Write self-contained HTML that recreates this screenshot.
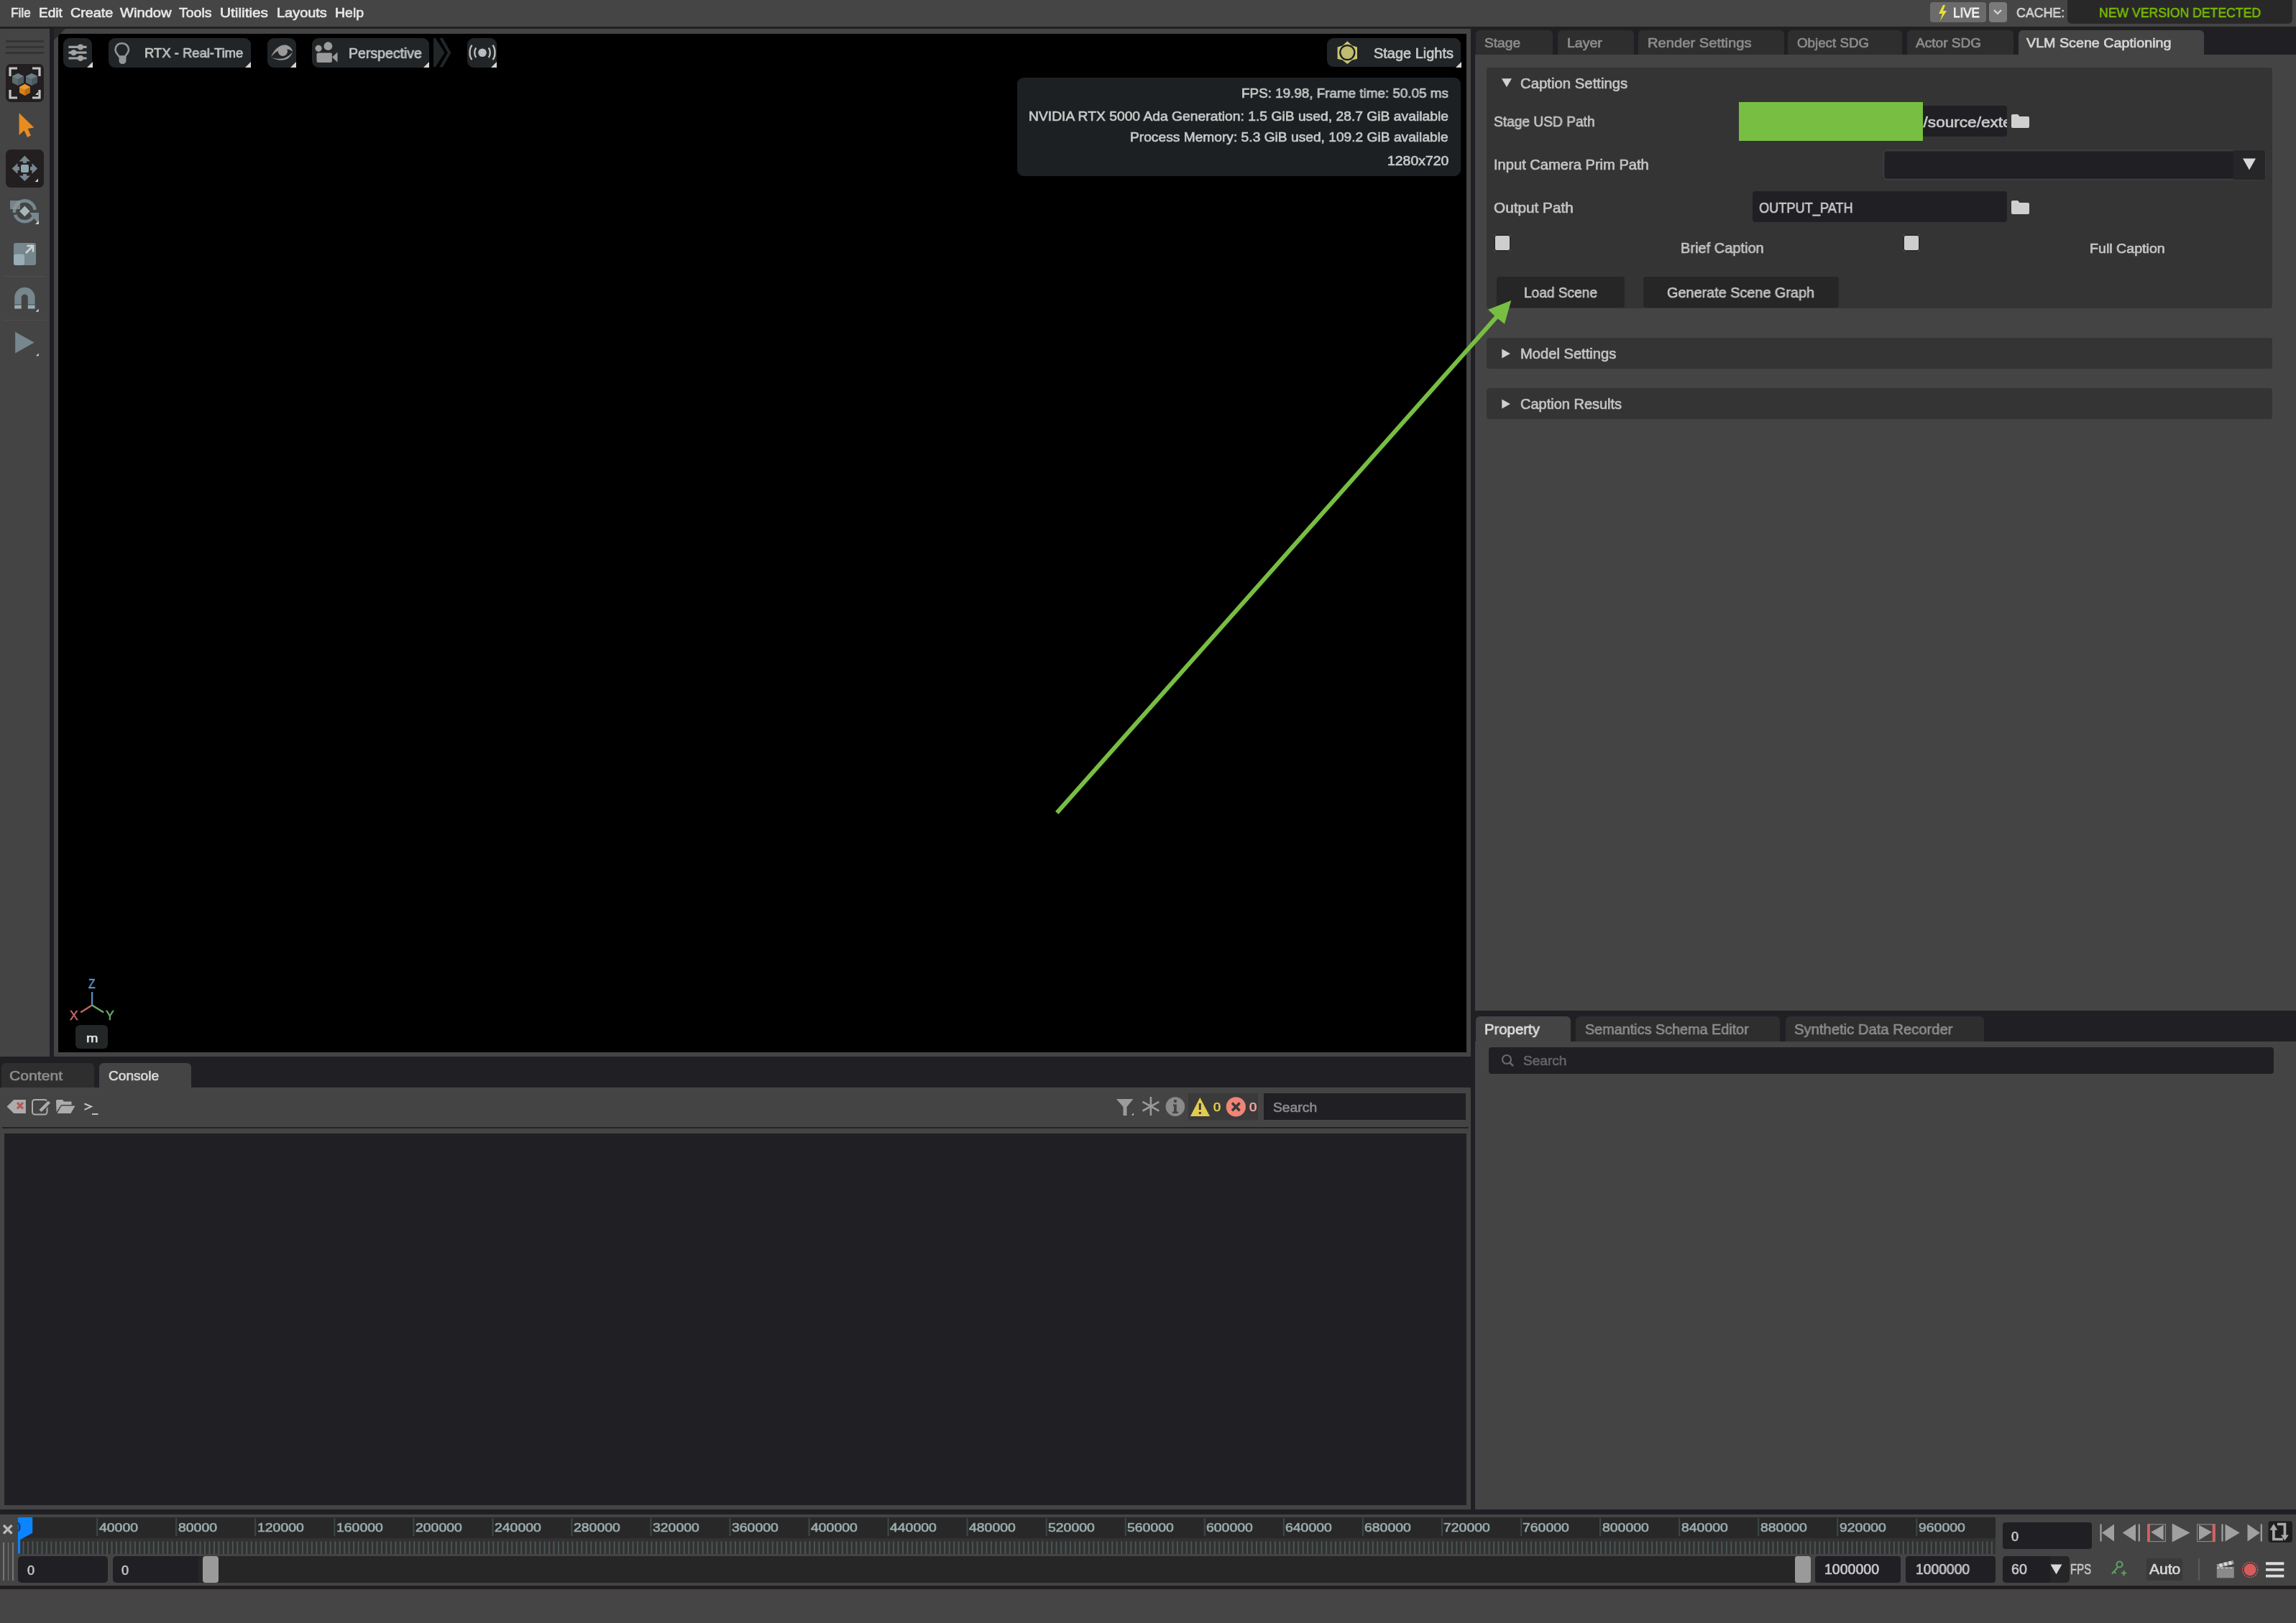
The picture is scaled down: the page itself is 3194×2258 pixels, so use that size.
<!DOCTYPE html><html><head><meta charset="utf-8"><style>
html,body{margin:0;padding:0;width:3194px;height:2258px;overflow:hidden;background:#444;}
body{position:relative;font-family:"Liberation Sans",sans-serif;}
div,span,svg{position:absolute;}
span{white-space:pre;transform-origin:0 0;will-change:transform;-webkit-text-stroke:0.65px currentColor;}
</style></head><body>
<div style="left:0px;top:0px;width:3194px;height:37px;background:#454545;"></div>
<div style="left:0px;top:37px;width:3194px;height:3px;background:#231f20;"></div>
<div style="left:0px;top:40px;width:3194px;height:2218px;background:#444;"></div>
<div style="left:69px;top:40px;width:6px;height:1430px;background:#202024;"></div>
<div style="left:75px;top:40px;width:1971px;height:1430px;background:#444;"></div>
<div style="left:81px;top:47px;width:1959px;height:1417px;background:#000;"></div>
<svg style="position:absolute;left:75px;top:40px" width="17" height="17"><path d="M0 0H16L0 16Z" fill="#282828"/></svg>
<div style="left:2046px;top:40px;width:6px;height:2067px;background:#202024;"></div>
<div style="left:2052px;top:40px;width:1142px;height:36px;background:#202024;"></div>
<div style="left:2052px;top:1406px;width:1142px;height:43px;background:#202024;"></div>
<div style="left:0px;top:1470px;width:2046px;height:43px;background:#202024;"></div>
<div style="left:0px;top:2100px;width:3194px;height:7px;background:#202024;"></div>
<div style="left:0px;top:2206px;width:3194px;height:5px;background:#231f20;"></div>
<div style="left:0px;top:2211px;width:3194px;height:47px;background:#454545;"></div>
<span style="left:14.80px;top:8.95px;font-size:18.46px;line-height:18.46px;color:#e6e6e6;font-weight:400;transform:scaleX(0.9315);">File</span>
<span style="left:54.30px;top:8.95px;font-size:18.46px;line-height:18.46px;color:#e6e6e6;font-weight:400;transform:scaleX(1.0344);">Edit</span>
<span style="left:97.60px;top:8.95px;font-size:18.46px;line-height:18.46px;color:#e6e6e6;font-weight:400;transform:scaleX(1.0723);">Create</span>
<span style="left:167.30px;top:8.95px;font-size:18.46px;line-height:18.46px;color:#e6e6e6;font-weight:400;transform:scaleX(1.0914);">Window</span>
<span style="left:249.20px;top:8.95px;font-size:18.46px;line-height:18.46px;color:#e6e6e6;font-weight:400;transform:scaleX(1.0584);">Tools</span>
<span style="left:306.30px;top:8.95px;font-size:18.46px;line-height:18.46px;color:#e6e6e6;font-weight:400;transform:scaleX(1.1278);">Utilities</span>
<span style="left:384.60px;top:8.95px;font-size:18.46px;line-height:18.46px;color:#e6e6e6;font-weight:400;transform:scaleX(1.0813);">Layouts</span>
<span style="left:465.70px;top:8.95px;font-size:18.46px;line-height:18.46px;color:#e6e6e6;font-weight:400;transform:scaleX(1.0561);">Help</span>
<div style="left:2685px;top:3px;width:78px;height:28px;background:#6b6b6b;border-radius:4px;"></div>
<svg style="left:2694px;top:6px" width="18" height="24" viewBox="0 0 18 24"><path d="M9 1 L3 13 L8 13 L5 23 L14 9 L9 9 L12 1Z" fill="#e8e030"/></svg>
<span style="left:2717.00px;top:8.68px;font-size:18.90px;line-height:18.90px;color:#f2f2f2;font-weight:400;transform:scaleX(0.9032);-webkit-text-stroke:0.8px #f2f2f2;">LIVE</span>
<div style="left:2766.6px;top:3px;width:25.09999999999991px;height:28px;background:#7a7a7a;border-radius:4px;"></div>
<svg style="left:2771px;top:10px" width="16" height="14"><path d="M3 4 L8 9 L13 4" stroke="#d8d8d8" stroke-width="2.2" fill="none"/></svg>
<span style="left:2804.50px;top:8.68px;font-size:18.90px;line-height:18.90px;color:#d4d4d4;font-weight:400;transform:scaleX(0.9399);">CACHE:</span>
<div style="left:2876.3px;top:0px;width:312.6999999999998px;height:33px;background:#282828;border-radius:0 0 6px 6px;"></div>
<span style="left:2919.70px;top:8.68px;font-size:18.90px;line-height:18.90px;color:#76b900;font-weight:400;transform:scaleX(0.9322);">NEW VERSION DETECTED</span>
<div style="left:8px;top:56px;width:53px;height:3px;background:#343434;"></div>
<div style="left:8px;top:64px;width:53px;height:3px;background:#343434;"></div>
<div style="left:8px;top:72px;width:53px;height:3px;background:#343434;"></div>
<div style="left:8px;top:89px;width:53px;height:53px;background:#231f20;border-radius:7px;"></div>
<svg style="left:8px;top:89px" width="53" height="53" viewBox="0 0 53 53">
<path d="M6 17 V6 H16 M37 6 H47 V17 M6 36 V47 H16 M37 47 H47 V36" stroke="#c4c4c4" stroke-width="3.2" fill="none"/>
<path d="M41 43 L45 39 L45 43Z" fill="#d0d0d0"/>
<path d="M17 13 L25 17 L25 26 L17 30 L9 26 L9 17Z" fill="#5d6b71"/><path d="M17 13 L25 17 L17 21 L9 17Z" fill="#6e7d83"/><path d="M17 21 L25 17 L25 26 L17 30Z" fill="#4d5a60"/>
<path d="M36 13 L44 17 L44 26 L36 30 L28 26 L28 17Z" fill="#5d6b71"/><path d="M36 13 L44 17 L36 21 L28 17Z" fill="#6e7d83"/><path d="M36 21 L44 17 L44 26 L36 30Z" fill="#4d5a60"/>
<path d="M26.5 28 L34 32 L34 40 L26.5 44 L19 40 L19 32Z" fill="#d8801c"/><path d="M26.5 28 L34 32 L26.5 36 L19 32Z" fill="#ec9a2c"/><path d="M26.5 36 L34 32 L34 40 L26.5 44Z" fill="#b86a14"/>
</svg>
<svg style="left:20px;top:152px" width="34" height="44" viewBox="0 0 34 44"><path d="M6.6 5.2 L27.3 25.6 L18.8 27 L22.9 36.6 L18.1 38.9 L13.6 29.6 L6.6 35.9Z" fill="#e88c22"/></svg>
<div style="left:8px;top:208px;width:53px;height:53px;background:#231f20;border-radius:7px;"></div>
<svg style="left:8px;top:208px" width="53" height="53" viewBox="0 0 53 53">
<rect x="21" y="21" width="11" height="11" rx="2" fill="#90a5ad"/>
<path d="M26.4 8.6 L34 16.5 L29 16.5 L29 19 L24 19 L24 16.5 L18.6 16.5Z" fill="#76878d"/>
<path d="M26.4 44.1 L34 36.5 L29 36.5 L29 34 L24 34 L24 36.5 L18.6 36.5Z" fill="#76878d"/>
<path d="M8.6 26.5 L16.5 19 L16.5 24 L19 24 L19 29 L16.5 29 L16.5 34Z" fill="#76878d"/>
<path d="M44.1 26.5 L36.5 19 L36.5 24 L34 24 L34 29 L36.5 29 L36.5 34Z" fill="#76878d"/>
<path d="M40.5 45 L45 40.5 L45 45Z" fill="#d0d0d0"/>
</svg>
<svg style="left:8px;top:268px" width="53" height="53" viewBox="0 0 53 53">
<path d="M12.14 27.90 A14.4 14.4 0 1 1 40.66 23.90" stroke="#76878d" stroke-width="4.6" fill="none"/>
<path d="M39.93 30.83 A14.4 14.4 0 0 1 12.87 30.83" stroke="#76878d" stroke-width="4.6" fill="none"/>
<path d="M33 22 L46 22 L46 38Z" fill="#76878d" transform="translate(0 6)"/>
<rect x="6" y="11" width="14" height="12" fill="#8b9a9e" opacity="0.75"/>
<path d="M26.4 18.5 L33.6 25.9 L26.4 33.2 L19.2 25.9Z" fill="#a8b8ba"/>
<path d="M41 44 L46 39 L46 44Z" fill="#d0d0d0"/>
</svg>
<svg style="left:18px;top:337px" width="33" height="33" viewBox="0 0 33 33">
<rect x="1" y="1" width="31" height="31" rx="3" fill="#76878d"/>
<rect x="1" y="16.5" width="15" height="15.5" rx="3" fill="#98adb5"/>
<path d="M18 15 L27.5 5.5 M19.5 5 H28 V13.5" stroke="#d2d2d2" stroke-width="2.6" fill="none"/>
</svg>
<div style="left:5px;top:383.5px;width:59px;height:1.5px;background:#4e4e4e;"></div>
<svg style="left:18px;top:398px" width="38" height="38" viewBox="0 0 38 38">
<path d="M2.2 25.5 V16 A14.2 14.2 0 0 1 30.6 16 V25.5 H20.8 V16 A4.4 4.4 0 0 0 11.8 16 V25.5Z" fill="#76878d"/>
<rect x="2.2" y="26.5" width="9.6" height="5" fill="#98adb5"/><rect x="20.8" y="26.5" width="9.8" height="5" fill="#98adb5"/>
<path d="M31.5 35.7 L35.7 31.5 L35.7 35.7Z" fill="#d0d0d0"/>
</svg>
<div style="left:5px;top:444.8px;width:59px;height:1.5px;background:#4e4e4e;"></div>
<svg style="left:18px;top:458px" width="38" height="40" viewBox="0 0 38 40">
<path d="M3.1 3.8 L29.7 18.5 L3.1 33.4Z" fill="#76878d"/>
<path d="M31.9 37.3 L35.8 33.4 L35.8 37.3Z" fill="#d0d0d0"/>
</svg>
<div style="left:88px;top:53px;width:40px;height:40.5px;background:#212527;border-radius:9px;"></div>
<svg style="left:120.5px;top:86px" width="8" height="8"><path d="M8 0 L8 8 L0 8Z" fill="#d4d4d4"/></svg>
<svg style="left:88px;top:53px" width="40" height="40" viewBox="0 0 40 40">
<path d="M7.4 12.4 H32.5 M7.4 20.2 H32.5 M7.4 28 H32.5" stroke="#a2a2a2" stroke-width="3.2"/>
<ellipse cx="24" cy="12.4" rx="4.3" ry="4" fill="#a2a2a2"/><ellipse cx="14.4" cy="20.2" rx="4.3" ry="4" fill="#a2a2a2"/><ellipse cx="24" cy="28" rx="4.3" ry="4" fill="#a2a2a2"/>
</svg>
<div style="left:150.8px;top:53px;width:198.0px;height:40.5px;background:#212527;border-radius:9px;"></div>
<svg style="left:341.2px;top:86px" width="8" height="8"><path d="M8 0 L8 8 L0 8Z" fill="#d4d4d4"/></svg>
<svg style="left:150px;top:53px" width="40" height="40" viewBox="0 0 40 40">
<path d="M19.5 7.2 C13.5 7.2 10.5 11.8 10.5 16 C10.5 20 13.5 22.5 15.5 25.5 L24 25.5 C26 22.5 29 20 29 16 C29 11.8 25.5 7.2 19.5 7.2Z" stroke="#8f9497" stroke-width="2.6" fill="none"/>
<path d="M15.5 25.5 H25.5 V32 A5 5 0 0 1 20.5 36 A5 5 0 0 1 15.5 32Z" fill="#959595"/>
</svg>
<span style="left:201.40px;top:65.12px;font-size:18.60px;line-height:18.60px;color:#c4c4c4;font-weight:400;transform:scaleX(0.9920);">RTX - Real-Time</span>
<div style="left:371.8px;top:53px;width:39.89999999999998px;height:40.5px;background:#212527;border-radius:9px;"></div>
<svg style="left:404px;top:86px" width="8" height="8"><path d="M8 0 L8 8 L0 8Z" fill="#d4d4d4"/></svg>
<svg style="left:371.8px;top:53px" width="41" height="40" viewBox="0 0 41 40">
<path d="M5 26.5 C9 15 18 9 25 9.5 C30 10 33.5 13.5 35.5 18.5 C31 15.5 26 14.5 21 15.5 C14 17 9 21 5 26.5Z" fill="#9a9a9a"/>
<path d="M5 26.5 C12 31 22 32.5 29 28 C32 25.5 34 22.5 35 19.5 C30 25 25 28.5 18.5 28.8 C13 29 8.5 28 5 26.5Z" fill="#9a9a9a"/>
<circle cx="21.4" cy="18.3" r="6.6" fill="#9a9a9a"/>
</svg>
<div style="left:434.4px;top:53px;width:162.60000000000002px;height:40.5px;background:#212527;border-radius:9px;"></div>
<svg style="left:589.3px;top:86px" width="8" height="8"><path d="M8 0 L8 8 L0 8Z" fill="#d4d4d4"/></svg>
<svg style="left:434px;top:53px" width="40" height="40" viewBox="0 0 40 40">
<circle cx="9.1" cy="14.3" r="4.6" fill="#9c9c9c"/><circle cx="22.4" cy="11.2" r="5.9" fill="#9c9c9c"/>
<rect x="6.5" y="20.6" width="21.4" height="13.4" rx="2" fill="#9a9a9a"/>
<path d="M28 26.5 L35.5 19.6 L35.5 33.7Z" fill="#9a9a9a"/>
</svg>
<span style="left:484.70px;top:64.66px;font-size:19.62px;line-height:19.62px;color:#c4c4c4;font-weight:400;transform:scaleX(0.9939);">Perspective</span>
<svg style="left:600px;top:52px" width="30" height="42" viewBox="0 0 30 42">
<path d="M3 1 H5.7 L18.7 21.3 L5.7 41.3 H3Z" fill="#222628"/>
<path d="M11.3 1 H16 L27.4 21.3 L16 41.3 H11.3 L22.7 21.3Z" fill="#222628"/>
</svg>
<div style="left:650.1px;top:53px;width:40.69999999999993px;height:40.5px;background:#212527;border-radius:9px;"></div>
<svg style="left:683px;top:86px" width="8" height="8"><path d="M8 0 L8 8 L0 8Z" fill="#d4d4d4"/></svg>
<svg style="left:650px;top:53px" width="41" height="40" viewBox="0 0 41 40">
<circle cx="21" cy="20.3" r="5.8" fill="#b8bcc0"/>
<path d="M12.3 13.5 C9.5 17 9.5 23.5 12.3 27" stroke="#c0c0c0" stroke-width="2.3" fill="none"/>
<path d="M29.7 13.5 C32.5 17 32.5 23.5 29.7 27" stroke="#c0c0c0" stroke-width="2.3" fill="none"/>
<path d="M6.6 9.8 C2.5 15 2.5 25.5 6.6 30" stroke="#c0c0c0" stroke-width="2.3" fill="none"/>
<path d="M35.4 9.8 C39.5 15 39.5 25.5 35.4 30" stroke="#c0c0c0" stroke-width="2.3" fill="none"/>
</svg>
<div style="left:1845.6px;top:53px;width:186.80000000000018px;height:40.3px;background:#212527;border-radius:9px;"></div>
<svg style="left:2024.6px;top:86px" width="8" height="8"><path d="M8 0 L8 8 L0 8Z" fill="#d4d4d4"/></svg>
<svg style="left:1856px;top:55px" width="36" height="36" viewBox="0 0 36 36">
<path d="M18.3 2.2 L25 8.6 L32 10.5 L32 27 L25 28.5 L18.3 34 L11.6 28.5 L4.6 27 L4.6 10.5 L11.6 8.6Z" fill="#c9c572"/>
<circle cx="18.3" cy="18.1" r="11.2" fill="#1a1d1f"/>
<circle cx="18.3" cy="18.1" r="8.9" fill="#bfbb70"/>
</svg>
<span style="left:1911.00px;top:65.21px;font-size:19.33px;line-height:19.33px;color:#c8c8c8;font-weight:400;transform:scaleX(1.0327);">Stage Lights</span>
<div style="left:1415px;top:108px;width:616.5px;height:137px;background:#1d2022;border-radius:9px;"></div>
<span style="left:1727.20px;top:121.38px;font-size:18.90px;line-height:18.90px;color:#c8c8c8;font-weight:400;transform:scaleX(0.9972);">FPS: 19.98, Frame time: 50.05 ms</span>
<span style="left:1430.90px;top:152.62px;font-size:18.60px;line-height:18.60px;color:#c8c8c8;font-weight:400;transform:scaleX(1.0373);">NVIDIA RTX 5000 Ada Generation: 1.5 GiB used, 28.7 GiB available</span>
<span style="left:1572.40px;top:182.28px;font-size:18.90px;line-height:18.90px;color:#c8c8c8;font-weight:400;transform:scaleX(1.0159);">Process Memory: 5.3 GiB used, 109.2 GiB available</span>
<span style="left:1929.80px;top:214.52px;font-size:18.02px;line-height:18.02px;color:#c8c8c8;font-weight:400;transform:scaleX(1.0786);">1280x720</span>
<svg style="left:90px;top:1360px" width="72" height="64" viewBox="0 0 72 64">
<path d="M38.1 20 V38.5" stroke="#5b90c2" stroke-width="2.2"/>
<path d="M38.1 38.5 L22.1 48.6" stroke="#c46464" stroke-width="2.4"/>
<path d="M38.1 38.5 L54.2 48.6" stroke="#6aaa6a" stroke-width="2.4"/>
</svg>
<span style="left:122.50px;top:1361.14px;font-size:17.88px;line-height:17.88px;color:#5b90c2;font-weight:400;transform:scaleX(0.8697);">Z</span>
<span style="left:97.00px;top:1404.64px;font-size:17.88px;line-height:17.88px;color:#c46464;font-weight:400;transform:scaleX(0.9728);">X</span>
<span style="left:146.60px;top:1404.64px;font-size:17.88px;line-height:17.88px;color:#6aaa6a;font-weight:400;transform:scaleX(0.9812);">Y</span>
<div style="left:104.9px;top:1425.7px;width:45.099999999999994px;height:33.59999999999991px;background:#222626;border-radius:6px;"></div>
<span style="left:119.80px;top:1436.52px;font-size:15.90px;line-height:15.90px;color:#e0e0e0;font-weight:400;transform:scaleX(1.2383);">m</span>
<div style="left:2052.5px;top:42px;width:107.5px;height:34px;background:#2e2e2e;border-radius:6px 6px 0 0;"></div>
<div style="left:2166.7px;top:42px;width:105.90000000000009px;height:34px;background:#2e2e2e;border-radius:6px 6px 0 0;"></div>
<div style="left:2279px;top:42px;width:202.5999999999999px;height:34px;background:#2e2e2e;border-radius:6px 6px 0 0;"></div>
<div style="left:2487px;top:42px;width:159px;height:34px;background:#2e2e2e;border-radius:6px 6px 0 0;"></div>
<div style="left:2652.5px;top:42px;width:148.80000000000018px;height:34px;background:#2e2e2e;border-radius:6px 6px 0 0;"></div>
<div style="left:2807.8px;top:42px;width:257.89999999999964px;height:34px;background:#444;border-radius:6px 6px 0 0;"></div>
<span style="left:2065.30px;top:51.76px;font-size:17.73px;line-height:17.73px;color:#8c8c8c;font-weight:400;transform:scaleX(1.0812);">Stage</span>
<span style="left:2179.80px;top:51.76px;font-size:17.73px;line-height:17.73px;color:#8c8c8c;font-weight:400;transform:scaleX(1.1026);">Layer</span>
<span style="left:2292.00px;top:51.76px;font-size:17.73px;line-height:17.73px;color:#8c8c8c;font-weight:400;transform:scaleX(1.1379);">Render Settings</span>
<span style="left:2500.40px;top:51.76px;font-size:17.73px;line-height:17.73px;color:#8c8c8c;font-weight:400;transform:scaleX(1.0581);">Object SDG</span>
<span style="left:2664.70px;top:51.76px;font-size:17.73px;line-height:17.73px;color:#8c8c8c;font-weight:400;transform:scaleX(1.0773);">Actor SDG</span>
<span style="left:2819.40px;top:51.76px;font-size:17.73px;line-height:17.73px;color:#d6d6d6;font-weight:400;transform:scaleX(1.1114);">VLM Scene Captioning</span>
<div style="left:2068px;top:94px;width:1093px;height:334.5px;background:#343434;border-radius:4px;"></div>
<svg style="left:2088px;top:108px" width="16" height="14"><path d="M1 1.3 H15 L8 13.3Z" fill="#d0d0d0"/></svg>
<span style="left:2115.40px;top:106.44px;font-size:20.35px;line-height:20.35px;color:#c4c4c4;font-weight:400;transform:scaleX(0.9972);">Caption Settings</span>
<span style="left:2077.70px;top:160.08px;font-size:19.48px;line-height:19.48px;color:#c4c4c4;font-weight:400;transform:scaleX(0.9846);">Stage USD Path</span>
<span style="left:2078.00px;top:219.71px;font-size:19.91px;line-height:19.91px;color:#c4c4c4;font-weight:400;transform:scaleX(1.0107);">Input Camera Prim Path</span>
<span style="left:2078.00px;top:278.94px;font-size:20.35px;line-height:20.35px;color:#c4c4c4;font-weight:400;transform:scaleX(1.0202);">Output Path</span>
<div style="left:2600px;top:147px;width:191.69999999999982px;height:43.30000000000001px;background:#201f24;border-radius:4px;"></div>
<div style="left:2675px;top:147px;width:116.7px;height:43.3px;overflow:hidden;"><span style="left:-11.57px;top:12.54px;font-size:20.0px;line-height:20.0px;color:#c8c8c8;transform:scaleX(1.13);">n/source/extensions</span></div>
<div style="left:2418.8px;top:142px;width:256.1999999999998px;height:54px;background:#78be43;"></div>
<svg style="left:2798px;top:159.3px" width="25" height="19" viewBox="0 0 25 19"><path d="M0 2 A2 2 0 0 1 2 0 H9 L11.5 3 H23 A2 2 0 0 1 25 5 V17 A2 2 0 0 1 23 19 H2 A2 2 0 0 1 0 17Z" fill="#d0d0d0"/></svg>
<div style="left:2619.4px;top:207.5px;width:533.0px;height:43.900000000000006px;background:#201f24;border-radius:6px;box-shadow:0 0 0 2.5px #393b3c inset;"></div>
<div style="left:3106.6px;top:209px;width:44.40000000000009px;height:41px;background:#262628;border-radius:0 4px 4px 0;"></div>
<svg style="left:3119px;top:219px" width="20" height="19"><path d="M1 1.4 H19 L10 17.4Z" fill="#d8d8d8"/></svg>
<div style="left:2438px;top:266.3px;width:353.6999999999998px;height:43.19999999999999px;background:#201f24;border-radius:4px;"></div>
<span style="left:2447.30px;top:278.94px;font-size:20.35px;line-height:20.35px;color:#c8c8c8;font-weight:400;transform:scaleX(0.8938);">OUTPUT_PATH</span>
<svg style="left:2798px;top:278.5px" width="25" height="19" viewBox="0 0 25 19"><path d="M0 2 A2 2 0 0 1 2 0 H9 L11.5 3 H23 A2 2 0 0 1 25 5 V17 A2 2 0 0 1 23 19 H2 A2 2 0 0 1 0 17Z" fill="#d0d0d0"/></svg>
<div style="left:2078.3px;top:325.6px;width:23.5px;height:24.799999999999955px;background:#cdcdcd;border-radius:4px;box-shadow:0 0 0 2px #2c2c2c inset;"></div>
<span style="left:2337.50px;top:335.05px;font-size:20.93px;line-height:20.93px;color:#c4c4c4;font-weight:400;transform:scaleX(0.9570);">Brief Caption</span>
<div style="left:2646.6px;top:325.7px;width:24.0px;height:24.600000000000023px;background:#cdcdcd;border-radius:4px;box-shadow:0 0 0 2px #2c2c2c inset;"></div>
<span style="left:2906.60px;top:335.95px;font-size:19.04px;line-height:19.04px;color:#c4c4c4;font-weight:400;transform:scaleX(1.0315);">Full Caption</span>
<div style="left:2082.2px;top:385.3px;width:178.20000000000027px;height:43.19999999999999px;background:#262626;border-radius:4px;"></div>
<span style="left:2120.00px;top:398.31px;font-size:19.91px;line-height:19.91px;color:#c4c4c4;font-weight:400;transform:scaleX(0.9596);">Load Scene</span>
<div style="left:2286px;top:385.3px;width:271.8000000000002px;height:43.19999999999999px;background:#262626;border-radius:4px;"></div>
<span style="left:2318.70px;top:398.31px;font-size:19.91px;line-height:19.91px;color:#c4c4c4;font-weight:400;transform:scaleX(0.9961);">Generate Scene Graph</span>
<div style="left:2068px;top:469.7px;width:1093px;height:43.19999999999999px;background:#343434;border-radius:4px;"></div>
<svg style="left:2088px;top:484px" width="15" height="16"><path d="M1.3 1.4 V14.5 L13 8Z" fill="#d0d0d0"/></svg>
<span style="left:2115.40px;top:482.84px;font-size:19.77px;line-height:19.77px;color:#c4c4c4;font-weight:400;transform:scaleX(1.0194);">Model Settings</span>
<div style="left:2068px;top:540.3px;width:1093px;height:43.10000000000002px;background:#343434;border-radius:4px;"></div>
<svg style="left:2088px;top:554px" width="15" height="16"><path d="M1.3 1.4 V14.5 L13 8Z" fill="#d0d0d0"/></svg>
<span style="left:2115.40px;top:553.34px;font-size:19.77px;line-height:19.77px;color:#c4c4c4;font-weight:400;transform:scaleX(1.0112);">Caption Results</span>
<div style="left:2192.3px;top:1414px;width:284.0px;height:35px;background:#2e2e2e;border-radius:6px 6px 0 0;"></div>
<div style="left:2483.6px;top:1414px;width:276.4000000000001px;height:35px;background:#2e2e2e;border-radius:6px 6px 0 0;"></div>
<div style="left:2052.6px;top:1414px;width:132.4000000000001px;height:35px;background:#444;border-radius:6px 6px 0 0;"></div>
<span style="left:2064.80px;top:1422.37px;font-size:20.79px;line-height:20.79px;color:#e0e0e0;font-weight:400;transform:scaleX(0.9778);">Property</span>
<span style="left:2204.50px;top:1422.37px;font-size:20.79px;line-height:20.79px;color:#8c8c8c;font-weight:400;transform:scaleX(0.9526);">Semantics Schema Editor</span>
<span style="left:2495.80px;top:1422.37px;font-size:20.79px;line-height:20.79px;color:#8c8c8c;font-weight:400;transform:scaleX(0.9738);">Synthetic Data Recorder</span>
<div style="left:2071.4px;top:1456.9px;width:1091.2999999999997px;height:36.899999999999864px;background:#201f24;border-radius:4px;"></div>
<svg style="left:2087px;top:1465px" width="22" height="22"><circle cx="9" cy="9" r="6" stroke="#6a6a6a" stroke-width="2.2" fill="none"/><path d="M13.3 13.3 L18 18" stroke="#6a6a6a" stroke-width="2.6"/></svg>
<span style="left:2118.50px;top:1467.45px;font-size:18.46px;line-height:18.46px;color:#646464;font-weight:400;transform:scaleX(1.0345);">Search</span>
<div style="left:1.6px;top:1479px;width:129.70000000000002px;height:34px;background:#2e2e2e;border-radius:6px 6px 0 0;"></div>
<div style="left:138px;top:1479px;width:127.89999999999998px;height:34px;background:#444;border-radius:6px 6px 0 0;"></div>
<span style="left:13.10px;top:1487.85px;font-size:18.46px;line-height:18.46px;color:#8c8c8c;font-weight:400;transform:scaleX(1.1478);">Content</span>
<span style="left:150.90px;top:1487.85px;font-size:18.46px;line-height:18.46px;color:#d8d8d8;font-weight:400;transform:scaleX(1.0350);">Console</span>
<div style="left:3px;top:1568px;width:2040px;height:1.7999999999999545px;background:#232326;"></div>
<div style="left:6.2px;top:1577.4px;width:2033.5px;height:516.4000000000001px;background:#201f24;"></div>
<svg style="left:6px;top:1526px" width="134" height="28" viewBox="0 0 134 28">
<path d="M3.5 13.5 L13.3 4 H29.9 V23 H13.3Z" fill="#acacac"/>
<path d="M18 8 L26 16.5 M26 8 L18 16.5" stroke="#b85656" stroke-width="3.2"/>
<rect x="39" y="4" width="20.5" height="20.6" rx="3.5" stroke="#acacac" stroke-width="2" fill="none"/>
<path d="M51.5 18 L62.5 7" stroke="#444" stroke-width="7"/>
<path d="M50 19.5 L62.5 7" stroke="#acacac" stroke-width="4.5"/>
<path d="M72 5.5 A1.5 1.5 0 0 1 73.5 4 H81 L83 6.5 H93.5 V11 H79 L72.5 21Z" fill="#acacac"/>
<path d="M79.5 12.5 H98.5 L92.5 23 H73.5Z" fill="#acacac"/>
<path d="M111.5 9.5 L121 13.5 L111.5 17.8" stroke="#c8c8c8" stroke-width="1.9" fill="none"/>
<path d="M122 24 H130.5" stroke="#c8c8c8" stroke-width="1.9"/>
</svg>
<svg style="left:1550px;top:1520px" width="200" height="40" viewBox="0 0 200 40">
<path d="M3 9 H26.4 L17.5 20 V32 H12.5 V20Z" fill="#9c9c9c"/>
<path d="M24 31.5 L27 28.5 V31.5Z" fill="#d0d0d0"/>
<path d="M50.9 6 V32 M39.5 12.8 L62.3 25.5 M62.3 12.8 L39.5 25.5" stroke="#9a9a9a" stroke-width="2.6"/>
<circle cx="84.9" cy="19.6" r="13.3" fill="#8a8a8a"/>
<circle cx="84.9" cy="12" r="2.2" fill="#444"/>
<path d="M82 16.5 H86.8 V26.5 H89 V29 H81 V26.5 H83 V19 H82Z" fill="#444"/>
<rect x="102.9" y="1" width="99.9" height="37.2" fill="#3a3a3a"/>
</svg>
<svg style="left:1652px;top:1520px" width="90" height="40" viewBox="0 0 90 40">
<path d="M17.3 7 L31 33 H4Z" fill="#e2cc50"/>
<path d="M17.3 15 V24" stroke="#3a3a3a" stroke-width="3"/><circle cx="17.3" cy="28.5" r="1.8" fill="#3a3a3a"/>
<circle cx="67.3" cy="19.9" r="13.6" fill="#ef8577"/>
<path d="M62 14.6 L72.6 25.2 M72.6 14.6 L62 25.2" stroke="#3a3a3a" stroke-width="3.6"/>
</svg>
<span style="left:1687.50px;top:1532.48px;font-size:17.01px;line-height:17.01px;color:#e2cc50;font-weight:400;transform:scaleX(1.0682);">0</span>
<span style="left:1737.50px;top:1532.48px;font-size:17.01px;line-height:17.01px;color:#f4a5a0;font-weight:400;transform:scaleX(1.0787);">0</span>
<div style="left:1758px;top:1521px;width:281.29999999999995px;height:37.200000000000045px;background:#201f24;"></div>
<span style="left:1770.50px;top:1531.50px;font-size:18.75px;line-height:18.75px;color:#8a8a8a;font-weight:400;transform:scaleX(1.0286);">Search</span>
<div style="left:25px;top:2111.2px;width:2751px;height:28.5px;background:#282828;"></div>
<div style="left:25px;top:2139.7px;width:2751px;height:22.300000000000182px;background:#323232;"></div>
<svg style="left:25px;top:2142px" width="2751" height="20"><rect x="6.50" y="2.5" width="2" height="17.5" fill="#4b5454"/><rect x="12.97" y="2.5" width="2" height="17.5" fill="#4b5454"/><rect x="19.45" y="2.5" width="2" height="17.5" fill="#4b5454"/><rect x="25.92" y="2.5" width="2" height="17.5" fill="#4b5454"/><rect x="32.39" y="2.5" width="2" height="17.5" fill="#4b5454"/><rect x="38.87" y="2.5" width="2" height="17.5" fill="#4b5454"/><rect x="45.34" y="2.5" width="2" height="17.5" fill="#4b5454"/><rect x="51.81" y="2.5" width="2" height="17.5" fill="#4b5454"/><rect x="58.29" y="2.5" width="2" height="17.5" fill="#4b5454"/><rect x="64.76" y="2.5" width="2" height="17.5" fill="#4b5454"/><rect x="71.24" y="2.5" width="2" height="17.5" fill="#4b5454"/><rect x="77.71" y="2.5" width="2" height="17.5" fill="#4b5454"/><rect x="84.18" y="2.5" width="2" height="17.5" fill="#4b5454"/><rect x="90.66" y="2.5" width="2" height="17.5" fill="#4b5454"/><rect x="97.13" y="2.5" width="2" height="17.5" fill="#4b5454"/><rect x="103.60" y="2.5" width="2" height="17.5" fill="#4b5454"/><rect x="110.08" y="2.5" width="2" height="17.5" fill="#4b5454"/><rect x="116.55" y="2.5" width="2" height="17.5" fill="#4b5454"/><rect x="123.02" y="2.5" width="2" height="17.5" fill="#4b5454"/><rect x="129.50" y="2.5" width="2" height="17.5" fill="#4b5454"/><rect x="135.97" y="2.5" width="2" height="17.5" fill="#4b5454"/><rect x="142.44" y="2.5" width="2" height="17.5" fill="#4b5454"/><rect x="148.92" y="2.5" width="2" height="17.5" fill="#4b5454"/><rect x="155.39" y="2.5" width="2" height="17.5" fill="#4b5454"/><rect x="161.86" y="2.5" width="2" height="17.5" fill="#4b5454"/><rect x="168.34" y="2.5" width="2" height="17.5" fill="#4b5454"/><rect x="174.81" y="2.5" width="2" height="17.5" fill="#4b5454"/><rect x="181.29" y="2.5" width="2" height="17.5" fill="#4b5454"/><rect x="187.76" y="2.5" width="2" height="17.5" fill="#4b5454"/><rect x="194.23" y="2.5" width="2" height="17.5" fill="#4b5454"/><rect x="200.71" y="2.5" width="2" height="17.5" fill="#4b5454"/><rect x="207.18" y="2.5" width="2" height="17.5" fill="#4b5454"/><rect x="213.65" y="2.5" width="2" height="17.5" fill="#4b5454"/><rect x="220.13" y="2.5" width="2" height="17.5" fill="#4b5454"/><rect x="226.60" y="2.5" width="2" height="17.5" fill="#4b5454"/><rect x="233.07" y="2.5" width="2" height="17.5" fill="#4b5454"/><rect x="239.55" y="2.5" width="2" height="17.5" fill="#4b5454"/><rect x="246.02" y="2.5" width="2" height="17.5" fill="#4b5454"/><rect x="252.49" y="2.5" width="2" height="17.5" fill="#4b5454"/><rect x="258.97" y="2.5" width="2" height="17.5" fill="#4b5454"/><rect x="265.44" y="2.5" width="2" height="17.5" fill="#4b5454"/><rect x="271.91" y="2.5" width="2" height="17.5" fill="#4b5454"/><rect x="278.39" y="2.5" width="2" height="17.5" fill="#4b5454"/><rect x="284.86" y="2.5" width="2" height="17.5" fill="#4b5454"/><rect x="291.34" y="2.5" width="2" height="17.5" fill="#4b5454"/><rect x="297.81" y="2.5" width="2" height="17.5" fill="#4b5454"/><rect x="304.28" y="2.5" width="2" height="17.5" fill="#4b5454"/><rect x="310.76" y="2.5" width="2" height="17.5" fill="#4b5454"/><rect x="317.23" y="2.5" width="2" height="17.5" fill="#4b5454"/><rect x="323.70" y="2.5" width="2" height="17.5" fill="#4b5454"/><rect x="330.18" y="2.5" width="2" height="17.5" fill="#4b5454"/><rect x="336.65" y="2.5" width="2" height="17.5" fill="#4b5454"/><rect x="343.12" y="2.5" width="2" height="17.5" fill="#4b5454"/><rect x="349.60" y="2.5" width="2" height="17.5" fill="#4b5454"/><rect x="356.07" y="2.5" width="2" height="17.5" fill="#4b5454"/><rect x="362.54" y="2.5" width="2" height="17.5" fill="#4b5454"/><rect x="369.02" y="2.5" width="2" height="17.5" fill="#4b5454"/><rect x="375.49" y="2.5" width="2" height="17.5" fill="#4b5454"/><rect x="381.96" y="2.5" width="2" height="17.5" fill="#4b5454"/><rect x="388.44" y="2.5" width="2" height="17.5" fill="#4b5454"/><rect x="394.91" y="2.5" width="2" height="17.5" fill="#4b5454"/><rect x="401.39" y="2.5" width="2" height="17.5" fill="#4b5454"/><rect x="407.86" y="2.5" width="2" height="17.5" fill="#4b5454"/><rect x="414.33" y="2.5" width="2" height="17.5" fill="#4b5454"/><rect x="420.81" y="2.5" width="2" height="17.5" fill="#4b5454"/><rect x="427.28" y="2.5" width="2" height="17.5" fill="#4b5454"/><rect x="433.75" y="2.5" width="2" height="17.5" fill="#4b5454"/><rect x="440.23" y="2.5" width="2" height="17.5" fill="#4b5454"/><rect x="446.70" y="2.5" width="2" height="17.5" fill="#4b5454"/><rect x="453.17" y="2.5" width="2" height="17.5" fill="#4b5454"/><rect x="459.65" y="2.5" width="2" height="17.5" fill="#4b5454"/><rect x="466.12" y="2.5" width="2" height="17.5" fill="#4b5454"/><rect x="472.59" y="2.5" width="2" height="17.5" fill="#4b5454"/><rect x="479.07" y="2.5" width="2" height="17.5" fill="#4b5454"/><rect x="485.54" y="2.5" width="2" height="17.5" fill="#4b5454"/><rect x="492.01" y="2.5" width="2" height="17.5" fill="#4b5454"/><rect x="498.49" y="2.5" width="2" height="17.5" fill="#4b5454"/><rect x="504.96" y="2.5" width="2" height="17.5" fill="#4b5454"/><rect x="511.44" y="2.5" width="2" height="17.5" fill="#4b5454"/><rect x="517.91" y="2.5" width="2" height="17.5" fill="#4b5454"/><rect x="524.38" y="2.5" width="2" height="17.5" fill="#4b5454"/><rect x="530.86" y="2.5" width="2" height="17.5" fill="#4b5454"/><rect x="537.33" y="2.5" width="2" height="17.5" fill="#4b5454"/><rect x="543.80" y="2.5" width="2" height="17.5" fill="#4b5454"/><rect x="550.28" y="2.5" width="2" height="17.5" fill="#4b5454"/><rect x="556.75" y="2.5" width="2" height="17.5" fill="#4b5454"/><rect x="563.22" y="2.5" width="2" height="17.5" fill="#4b5454"/><rect x="569.70" y="2.5" width="2" height="17.5" fill="#4b5454"/><rect x="576.17" y="2.5" width="2" height="17.5" fill="#4b5454"/><rect x="582.64" y="2.5" width="2" height="17.5" fill="#4b5454"/><rect x="589.12" y="2.5" width="2" height="17.5" fill="#4b5454"/><rect x="595.59" y="2.5" width="2" height="17.5" fill="#4b5454"/><rect x="602.06" y="2.5" width="2" height="17.5" fill="#4b5454"/><rect x="608.54" y="2.5" width="2" height="17.5" fill="#4b5454"/><rect x="615.01" y="2.5" width="2" height="17.5" fill="#4b5454"/><rect x="621.49" y="2.5" width="2" height="17.5" fill="#4b5454"/><rect x="627.96" y="2.5" width="2" height="17.5" fill="#4b5454"/><rect x="634.43" y="2.5" width="2" height="17.5" fill="#4b5454"/><rect x="640.91" y="2.5" width="2" height="17.5" fill="#4b5454"/><rect x="647.38" y="2.5" width="2" height="17.5" fill="#4b5454"/><rect x="653.85" y="2.5" width="2" height="17.5" fill="#4b5454"/><rect x="660.33" y="2.5" width="2" height="17.5" fill="#4b5454"/><rect x="666.80" y="2.5" width="2" height="17.5" fill="#4b5454"/><rect x="673.27" y="2.5" width="2" height="17.5" fill="#4b5454"/><rect x="679.75" y="2.5" width="2" height="17.5" fill="#4b5454"/><rect x="686.22" y="2.5" width="2" height="17.5" fill="#4b5454"/><rect x="692.69" y="2.5" width="2" height="17.5" fill="#4b5454"/><rect x="699.17" y="2.5" width="2" height="17.5" fill="#4b5454"/><rect x="705.64" y="2.5" width="2" height="17.5" fill="#4b5454"/><rect x="712.11" y="2.5" width="2" height="17.5" fill="#4b5454"/><rect x="718.59" y="2.5" width="2" height="17.5" fill="#4b5454"/><rect x="725.06" y="2.5" width="2" height="17.5" fill="#4b5454"/><rect x="731.54" y="2.5" width="2" height="17.5" fill="#4b5454"/><rect x="738.01" y="2.5" width="2" height="17.5" fill="#4b5454"/><rect x="744.48" y="2.5" width="2" height="17.5" fill="#4b5454"/><rect x="750.96" y="2.5" width="2" height="17.5" fill="#4b5454"/><rect x="757.43" y="2.5" width="2" height="17.5" fill="#4b5454"/><rect x="763.90" y="2.5" width="2" height="17.5" fill="#4b5454"/><rect x="770.38" y="2.5" width="2" height="17.5" fill="#4b5454"/><rect x="776.85" y="2.5" width="2" height="17.5" fill="#4b5454"/><rect x="783.32" y="2.5" width="2" height="17.5" fill="#4b5454"/><rect x="789.80" y="2.5" width="2" height="17.5" fill="#4b5454"/><rect x="796.27" y="2.5" width="2" height="17.5" fill="#4b5454"/><rect x="802.74" y="2.5" width="2" height="17.5" fill="#4b5454"/><rect x="809.22" y="2.5" width="2" height="17.5" fill="#4b5454"/><rect x="815.69" y="2.5" width="2" height="17.5" fill="#4b5454"/><rect x="822.16" y="2.5" width="2" height="17.5" fill="#4b5454"/><rect x="828.64" y="2.5" width="2" height="17.5" fill="#4b5454"/><rect x="835.11" y="2.5" width="2" height="17.5" fill="#4b5454"/><rect x="841.59" y="2.5" width="2" height="17.5" fill="#4b5454"/><rect x="848.06" y="2.5" width="2" height="17.5" fill="#4b5454"/><rect x="854.53" y="2.5" width="2" height="17.5" fill="#4b5454"/><rect x="861.01" y="2.5" width="2" height="17.5" fill="#4b5454"/><rect x="867.48" y="2.5" width="2" height="17.5" fill="#4b5454"/><rect x="873.95" y="2.5" width="2" height="17.5" fill="#4b5454"/><rect x="880.43" y="2.5" width="2" height="17.5" fill="#4b5454"/><rect x="886.90" y="2.5" width="2" height="17.5" fill="#4b5454"/><rect x="893.37" y="2.5" width="2" height="17.5" fill="#4b5454"/><rect x="899.85" y="2.5" width="2" height="17.5" fill="#4b5454"/><rect x="906.32" y="2.5" width="2" height="17.5" fill="#4b5454"/><rect x="912.79" y="2.5" width="2" height="17.5" fill="#4b5454"/><rect x="919.27" y="2.5" width="2" height="17.5" fill="#4b5454"/><rect x="925.74" y="2.5" width="2" height="17.5" fill="#4b5454"/><rect x="932.21" y="2.5" width="2" height="17.5" fill="#4b5454"/><rect x="938.69" y="2.5" width="2" height="17.5" fill="#4b5454"/><rect x="945.16" y="2.5" width="2" height="17.5" fill="#4b5454"/><rect x="951.64" y="2.5" width="2" height="17.5" fill="#4b5454"/><rect x="958.11" y="2.5" width="2" height="17.5" fill="#4b5454"/><rect x="964.58" y="2.5" width="2" height="17.5" fill="#4b5454"/><rect x="971.06" y="2.5" width="2" height="17.5" fill="#4b5454"/><rect x="977.53" y="2.5" width="2" height="17.5" fill="#4b5454"/><rect x="984.00" y="2.5" width="2" height="17.5" fill="#4b5454"/><rect x="990.48" y="2.5" width="2" height="17.5" fill="#4b5454"/><rect x="996.95" y="2.5" width="2" height="17.5" fill="#4b5454"/><rect x="1003.42" y="2.5" width="2" height="17.5" fill="#4b5454"/><rect x="1009.90" y="2.5" width="2" height="17.5" fill="#4b5454"/><rect x="1016.37" y="2.5" width="2" height="17.5" fill="#4b5454"/><rect x="1022.84" y="2.5" width="2" height="17.5" fill="#4b5454"/><rect x="1029.32" y="2.5" width="2" height="17.5" fill="#4b5454"/><rect x="1035.79" y="2.5" width="2" height="17.5" fill="#4b5454"/><rect x="1042.26" y="2.5" width="2" height="17.5" fill="#4b5454"/><rect x="1048.74" y="2.5" width="2" height="17.5" fill="#4b5454"/><rect x="1055.21" y="2.5" width="2" height="17.5" fill="#4b5454"/><rect x="1061.69" y="2.5" width="2" height="17.5" fill="#4b5454"/><rect x="1068.16" y="2.5" width="2" height="17.5" fill="#4b5454"/><rect x="1074.63" y="2.5" width="2" height="17.5" fill="#4b5454"/><rect x="1081.11" y="2.5" width="2" height="17.5" fill="#4b5454"/><rect x="1087.58" y="2.5" width="2" height="17.5" fill="#4b5454"/><rect x="1094.05" y="2.5" width="2" height="17.5" fill="#4b5454"/><rect x="1100.53" y="2.5" width="2" height="17.5" fill="#4b5454"/><rect x="1107.00" y="2.5" width="2" height="17.5" fill="#4b5454"/><rect x="1113.47" y="2.5" width="2" height="17.5" fill="#4b5454"/><rect x="1119.95" y="2.5" width="2" height="17.5" fill="#4b5454"/><rect x="1126.42" y="2.5" width="2" height="17.5" fill="#4b5454"/><rect x="1132.89" y="2.5" width="2" height="17.5" fill="#4b5454"/><rect x="1139.37" y="2.5" width="2" height="17.5" fill="#4b5454"/><rect x="1145.84" y="2.5" width="2" height="17.5" fill="#4b5454"/><rect x="1152.31" y="2.5" width="2" height="17.5" fill="#4b5454"/><rect x="1158.79" y="2.5" width="2" height="17.5" fill="#4b5454"/><rect x="1165.26" y="2.5" width="2" height="17.5" fill="#4b5454"/><rect x="1171.74" y="2.5" width="2" height="17.5" fill="#4b5454"/><rect x="1178.21" y="2.5" width="2" height="17.5" fill="#4b5454"/><rect x="1184.68" y="2.5" width="2" height="17.5" fill="#4b5454"/><rect x="1191.16" y="2.5" width="2" height="17.5" fill="#4b5454"/><rect x="1197.63" y="2.5" width="2" height="17.5" fill="#4b5454"/><rect x="1204.10" y="2.5" width="2" height="17.5" fill="#4b5454"/><rect x="1210.58" y="2.5" width="2" height="17.5" fill="#4b5454"/><rect x="1217.05" y="2.5" width="2" height="17.5" fill="#4b5454"/><rect x="1223.52" y="2.5" width="2" height="17.5" fill="#4b5454"/><rect x="1230.00" y="2.5" width="2" height="17.5" fill="#4b5454"/><rect x="1236.47" y="2.5" width="2" height="17.5" fill="#4b5454"/><rect x="1242.94" y="2.5" width="2" height="17.5" fill="#4b5454"/><rect x="1249.42" y="2.5" width="2" height="17.5" fill="#4b5454"/><rect x="1255.89" y="2.5" width="2" height="17.5" fill="#4b5454"/><rect x="1262.36" y="2.5" width="2" height="17.5" fill="#4b5454"/><rect x="1268.84" y="2.5" width="2" height="17.5" fill="#4b5454"/><rect x="1275.31" y="2.5" width="2" height="17.5" fill="#4b5454"/><rect x="1281.79" y="2.5" width="2" height="17.5" fill="#4b5454"/><rect x="1288.26" y="2.5" width="2" height="17.5" fill="#4b5454"/><rect x="1294.73" y="2.5" width="2" height="17.5" fill="#4b5454"/><rect x="1301.21" y="2.5" width="2" height="17.5" fill="#4b5454"/><rect x="1307.68" y="2.5" width="2" height="17.5" fill="#4b5454"/><rect x="1314.15" y="2.5" width="2" height="17.5" fill="#4b5454"/><rect x="1320.63" y="2.5" width="2" height="17.5" fill="#4b5454"/><rect x="1327.10" y="2.5" width="2" height="17.5" fill="#4b5454"/><rect x="1333.57" y="2.5" width="2" height="17.5" fill="#4b5454"/><rect x="1340.05" y="2.5" width="2" height="17.5" fill="#4b5454"/><rect x="1346.52" y="2.5" width="2" height="17.5" fill="#4b5454"/><rect x="1352.99" y="2.5" width="2" height="17.5" fill="#4b5454"/><rect x="1359.47" y="2.5" width="2" height="17.5" fill="#4b5454"/><rect x="1365.94" y="2.5" width="2" height="17.5" fill="#4b5454"/><rect x="1372.41" y="2.5" width="2" height="17.5" fill="#4b5454"/><rect x="1378.89" y="2.5" width="2" height="17.5" fill="#4b5454"/><rect x="1385.36" y="2.5" width="2" height="17.5" fill="#4b5454"/><rect x="1391.84" y="2.5" width="2" height="17.5" fill="#4b5454"/><rect x="1398.31" y="2.5" width="2" height="17.5" fill="#4b5454"/><rect x="1404.78" y="2.5" width="2" height="17.5" fill="#4b5454"/><rect x="1411.26" y="2.5" width="2" height="17.5" fill="#4b5454"/><rect x="1417.73" y="2.5" width="2" height="17.5" fill="#4b5454"/><rect x="1424.20" y="2.5" width="2" height="17.5" fill="#4b5454"/><rect x="1430.68" y="2.5" width="2" height="17.5" fill="#4b5454"/><rect x="1437.15" y="2.5" width="2" height="17.5" fill="#4b5454"/><rect x="1443.62" y="2.5" width="2" height="17.5" fill="#4b5454"/><rect x="1450.10" y="2.5" width="2" height="17.5" fill="#4b5454"/><rect x="1456.57" y="2.5" width="2" height="17.5" fill="#4b5454"/><rect x="1463.04" y="2.5" width="2" height="17.5" fill="#4b5454"/><rect x="1469.52" y="2.5" width="2" height="17.5" fill="#4b5454"/><rect x="1475.99" y="2.5" width="2" height="17.5" fill="#4b5454"/><rect x="1482.46" y="2.5" width="2" height="17.5" fill="#4b5454"/><rect x="1488.94" y="2.5" width="2" height="17.5" fill="#4b5454"/><rect x="1495.41" y="2.5" width="2" height="17.5" fill="#4b5454"/><rect x="1501.89" y="2.5" width="2" height="17.5" fill="#4b5454"/><rect x="1508.36" y="2.5" width="2" height="17.5" fill="#4b5454"/><rect x="1514.83" y="2.5" width="2" height="17.5" fill="#4b5454"/><rect x="1521.31" y="2.5" width="2" height="17.5" fill="#4b5454"/><rect x="1527.78" y="2.5" width="2" height="17.5" fill="#4b5454"/><rect x="1534.25" y="2.5" width="2" height="17.5" fill="#4b5454"/><rect x="1540.73" y="2.5" width="2" height="17.5" fill="#4b5454"/><rect x="1547.20" y="2.5" width="2" height="17.5" fill="#4b5454"/><rect x="1553.67" y="2.5" width="2" height="17.5" fill="#4b5454"/><rect x="1560.15" y="2.5" width="2" height="17.5" fill="#4b5454"/><rect x="1566.62" y="2.5" width="2" height="17.5" fill="#4b5454"/><rect x="1573.09" y="2.5" width="2" height="17.5" fill="#4b5454"/><rect x="1579.57" y="2.5" width="2" height="17.5" fill="#4b5454"/><rect x="1586.04" y="2.5" width="2" height="17.5" fill="#4b5454"/><rect x="1592.51" y="2.5" width="2" height="17.5" fill="#4b5454"/><rect x="1598.99" y="2.5" width="2" height="17.5" fill="#4b5454"/><rect x="1605.46" y="2.5" width="2" height="17.5" fill="#4b5454"/><rect x="1611.94" y="2.5" width="2" height="17.5" fill="#4b5454"/><rect x="1618.41" y="2.5" width="2" height="17.5" fill="#4b5454"/><rect x="1624.88" y="2.5" width="2" height="17.5" fill="#4b5454"/><rect x="1631.36" y="2.5" width="2" height="17.5" fill="#4b5454"/><rect x="1637.83" y="2.5" width="2" height="17.5" fill="#4b5454"/><rect x="1644.30" y="2.5" width="2" height="17.5" fill="#4b5454"/><rect x="1650.78" y="2.5" width="2" height="17.5" fill="#4b5454"/><rect x="1657.25" y="2.5" width="2" height="17.5" fill="#4b5454"/><rect x="1663.72" y="2.5" width="2" height="17.5" fill="#4b5454"/><rect x="1670.20" y="2.5" width="2" height="17.5" fill="#4b5454"/><rect x="1676.67" y="2.5" width="2" height="17.5" fill="#4b5454"/><rect x="1683.14" y="2.5" width="2" height="17.5" fill="#4b5454"/><rect x="1689.62" y="2.5" width="2" height="17.5" fill="#4b5454"/><rect x="1696.09" y="2.5" width="2" height="17.5" fill="#4b5454"/><rect x="1702.56" y="2.5" width="2" height="17.5" fill="#4b5454"/><rect x="1709.04" y="2.5" width="2" height="17.5" fill="#4b5454"/><rect x="1715.51" y="2.5" width="2" height="17.5" fill="#4b5454"/><rect x="1721.99" y="2.5" width="2" height="17.5" fill="#4b5454"/><rect x="1728.46" y="2.5" width="2" height="17.5" fill="#4b5454"/><rect x="1734.93" y="2.5" width="2" height="17.5" fill="#4b5454"/><rect x="1741.41" y="2.5" width="2" height="17.5" fill="#4b5454"/><rect x="1747.88" y="2.5" width="2" height="17.5" fill="#4b5454"/><rect x="1754.35" y="2.5" width="2" height="17.5" fill="#4b5454"/><rect x="1760.83" y="2.5" width="2" height="17.5" fill="#4b5454"/><rect x="1767.30" y="2.5" width="2" height="17.5" fill="#4b5454"/><rect x="1773.77" y="2.5" width="2" height="17.5" fill="#4b5454"/><rect x="1780.25" y="2.5" width="2" height="17.5" fill="#4b5454"/><rect x="1786.72" y="2.5" width="2" height="17.5" fill="#4b5454"/><rect x="1793.19" y="2.5" width="2" height="17.5" fill="#4b5454"/><rect x="1799.67" y="2.5" width="2" height="17.5" fill="#4b5454"/><rect x="1806.14" y="2.5" width="2" height="17.5" fill="#4b5454"/><rect x="1812.61" y="2.5" width="2" height="17.5" fill="#4b5454"/><rect x="1819.09" y="2.5" width="2" height="17.5" fill="#4b5454"/><rect x="1825.56" y="2.5" width="2" height="17.5" fill="#4b5454"/><rect x="1832.04" y="2.5" width="2" height="17.5" fill="#4b5454"/><rect x="1838.51" y="2.5" width="2" height="17.5" fill="#4b5454"/><rect x="1844.98" y="2.5" width="2" height="17.5" fill="#4b5454"/><rect x="1851.46" y="2.5" width="2" height="17.5" fill="#4b5454"/><rect x="1857.93" y="2.5" width="2" height="17.5" fill="#4b5454"/><rect x="1864.40" y="2.5" width="2" height="17.5" fill="#4b5454"/><rect x="1870.88" y="2.5" width="2" height="17.5" fill="#4b5454"/><rect x="1877.35" y="2.5" width="2" height="17.5" fill="#4b5454"/><rect x="1883.82" y="2.5" width="2" height="17.5" fill="#4b5454"/><rect x="1890.30" y="2.5" width="2" height="17.5" fill="#4b5454"/><rect x="1896.77" y="2.5" width="2" height="17.5" fill="#4b5454"/><rect x="1903.24" y="2.5" width="2" height="17.5" fill="#4b5454"/><rect x="1909.72" y="2.5" width="2" height="17.5" fill="#4b5454"/><rect x="1916.19" y="2.5" width="2" height="17.5" fill="#4b5454"/><rect x="1922.66" y="2.5" width="2" height="17.5" fill="#4b5454"/><rect x="1929.14" y="2.5" width="2" height="17.5" fill="#4b5454"/><rect x="1935.61" y="2.5" width="2" height="17.5" fill="#4b5454"/><rect x="1942.09" y="2.5" width="2" height="17.5" fill="#4b5454"/><rect x="1948.56" y="2.5" width="2" height="17.5" fill="#4b5454"/><rect x="1955.03" y="2.5" width="2" height="17.5" fill="#4b5454"/><rect x="1961.51" y="2.5" width="2" height="17.5" fill="#4b5454"/><rect x="1967.98" y="2.5" width="2" height="17.5" fill="#4b5454"/><rect x="1974.45" y="2.5" width="2" height="17.5" fill="#4b5454"/><rect x="1980.93" y="2.5" width="2" height="17.5" fill="#4b5454"/><rect x="1987.40" y="2.5" width="2" height="17.5" fill="#4b5454"/><rect x="1993.87" y="2.5" width="2" height="17.5" fill="#4b5454"/><rect x="2000.35" y="2.5" width="2" height="17.5" fill="#4b5454"/><rect x="2006.82" y="2.5" width="2" height="17.5" fill="#4b5454"/><rect x="2013.29" y="2.5" width="2" height="17.5" fill="#4b5454"/><rect x="2019.77" y="2.5" width="2" height="17.5" fill="#4b5454"/><rect x="2026.24" y="2.5" width="2" height="17.5" fill="#4b5454"/><rect x="2032.71" y="2.5" width="2" height="17.5" fill="#4b5454"/><rect x="2039.19" y="2.5" width="2" height="17.5" fill="#4b5454"/><rect x="2045.66" y="2.5" width="2" height="17.5" fill="#4b5454"/><rect x="2052.14" y="2.5" width="2" height="17.5" fill="#4b5454"/><rect x="2058.61" y="2.5" width="2" height="17.5" fill="#4b5454"/><rect x="2065.08" y="2.5" width="2" height="17.5" fill="#4b5454"/><rect x="2071.56" y="2.5" width="2" height="17.5" fill="#4b5454"/><rect x="2078.03" y="2.5" width="2" height="17.5" fill="#4b5454"/><rect x="2084.50" y="2.5" width="2" height="17.5" fill="#4b5454"/><rect x="2090.98" y="2.5" width="2" height="17.5" fill="#4b5454"/><rect x="2097.45" y="2.5" width="2" height="17.5" fill="#4b5454"/><rect x="2103.92" y="2.5" width="2" height="17.5" fill="#4b5454"/><rect x="2110.40" y="2.5" width="2" height="17.5" fill="#4b5454"/><rect x="2116.87" y="2.5" width="2" height="17.5" fill="#4b5454"/><rect x="2123.34" y="2.5" width="2" height="17.5" fill="#4b5454"/><rect x="2129.82" y="2.5" width="2" height="17.5" fill="#4b5454"/><rect x="2136.29" y="2.5" width="2" height="17.5" fill="#4b5454"/><rect x="2142.76" y="2.5" width="2" height="17.5" fill="#4b5454"/><rect x="2149.24" y="2.5" width="2" height="17.5" fill="#4b5454"/><rect x="2155.71" y="2.5" width="2" height="17.5" fill="#4b5454"/><rect x="2162.19" y="2.5" width="2" height="17.5" fill="#4b5454"/><rect x="2168.66" y="2.5" width="2" height="17.5" fill="#4b5454"/><rect x="2175.13" y="2.5" width="2" height="17.5" fill="#4b5454"/><rect x="2181.61" y="2.5" width="2" height="17.5" fill="#4b5454"/><rect x="2188.08" y="2.5" width="2" height="17.5" fill="#4b5454"/><rect x="2194.55" y="2.5" width="2" height="17.5" fill="#4b5454"/><rect x="2201.03" y="2.5" width="2" height="17.5" fill="#4b5454"/><rect x="2207.50" y="2.5" width="2" height="17.5" fill="#4b5454"/><rect x="2213.97" y="2.5" width="2" height="17.5" fill="#4b5454"/><rect x="2220.45" y="2.5" width="2" height="17.5" fill="#4b5454"/><rect x="2226.92" y="2.5" width="2" height="17.5" fill="#4b5454"/><rect x="2233.39" y="2.5" width="2" height="17.5" fill="#4b5454"/><rect x="2239.87" y="2.5" width="2" height="17.5" fill="#4b5454"/><rect x="2246.34" y="2.5" width="2" height="17.5" fill="#4b5454"/><rect x="2252.81" y="2.5" width="2" height="17.5" fill="#4b5454"/><rect x="2259.29" y="2.5" width="2" height="17.5" fill="#4b5454"/><rect x="2265.76" y="2.5" width="2" height="17.5" fill="#4b5454"/><rect x="2272.24" y="2.5" width="2" height="17.5" fill="#4b5454"/><rect x="2278.71" y="2.5" width="2" height="17.5" fill="#4b5454"/><rect x="2285.18" y="2.5" width="2" height="17.5" fill="#4b5454"/><rect x="2291.66" y="2.5" width="2" height="17.5" fill="#4b5454"/><rect x="2298.13" y="2.5" width="2" height="17.5" fill="#4b5454"/><rect x="2304.60" y="2.5" width="2" height="17.5" fill="#4b5454"/><rect x="2311.08" y="2.5" width="2" height="17.5" fill="#4b5454"/><rect x="2317.55" y="2.5" width="2" height="17.5" fill="#4b5454"/><rect x="2324.02" y="2.5" width="2" height="17.5" fill="#4b5454"/><rect x="2330.50" y="2.5" width="2" height="17.5" fill="#4b5454"/><rect x="2336.97" y="2.5" width="2" height="17.5" fill="#4b5454"/><rect x="2343.44" y="2.5" width="2" height="17.5" fill="#4b5454"/><rect x="2349.92" y="2.5" width="2" height="17.5" fill="#4b5454"/><rect x="2356.39" y="2.5" width="2" height="17.5" fill="#4b5454"/><rect x="2362.86" y="2.5" width="2" height="17.5" fill="#4b5454"/><rect x="2369.34" y="2.5" width="2" height="17.5" fill="#4b5454"/><rect x="2375.81" y="2.5" width="2" height="17.5" fill="#4b5454"/><rect x="2382.29" y="2.5" width="2" height="17.5" fill="#4b5454"/><rect x="2388.76" y="2.5" width="2" height="17.5" fill="#4b5454"/><rect x="2395.23" y="2.5" width="2" height="17.5" fill="#4b5454"/><rect x="2401.71" y="2.5" width="2" height="17.5" fill="#4b5454"/><rect x="2408.18" y="2.5" width="2" height="17.5" fill="#4b5454"/><rect x="2414.65" y="2.5" width="2" height="17.5" fill="#4b5454"/><rect x="2421.13" y="2.5" width="2" height="17.5" fill="#4b5454"/><rect x="2427.60" y="2.5" width="2" height="17.5" fill="#4b5454"/><rect x="2434.07" y="2.5" width="2" height="17.5" fill="#4b5454"/><rect x="2440.55" y="2.5" width="2" height="17.5" fill="#4b5454"/><rect x="2447.02" y="2.5" width="2" height="17.5" fill="#4b5454"/><rect x="2453.49" y="2.5" width="2" height="17.5" fill="#4b5454"/><rect x="2459.97" y="2.5" width="2" height="17.5" fill="#4b5454"/><rect x="2466.44" y="2.5" width="2" height="17.5" fill="#4b5454"/><rect x="2472.91" y="2.5" width="2" height="17.5" fill="#4b5454"/><rect x="2479.39" y="2.5" width="2" height="17.5" fill="#4b5454"/><rect x="2485.86" y="2.5" width="2" height="17.5" fill="#4b5454"/><rect x="2492.34" y="2.5" width="2" height="17.5" fill="#4b5454"/><rect x="2498.81" y="2.5" width="2" height="17.5" fill="#4b5454"/><rect x="2505.28" y="2.5" width="2" height="17.5" fill="#4b5454"/><rect x="2511.76" y="2.5" width="2" height="17.5" fill="#4b5454"/><rect x="2518.23" y="2.5" width="2" height="17.5" fill="#4b5454"/><rect x="2524.70" y="2.5" width="2" height="17.5" fill="#4b5454"/><rect x="2531.18" y="2.5" width="2" height="17.5" fill="#4b5454"/><rect x="2537.65" y="2.5" width="2" height="17.5" fill="#4b5454"/><rect x="2544.12" y="2.5" width="2" height="17.5" fill="#4b5454"/><rect x="2550.60" y="2.5" width="2" height="17.5" fill="#4b5454"/><rect x="2557.07" y="2.5" width="2" height="17.5" fill="#4b5454"/><rect x="2563.54" y="2.5" width="2" height="17.5" fill="#4b5454"/><rect x="2570.02" y="2.5" width="2" height="17.5" fill="#4b5454"/><rect x="2576.49" y="2.5" width="2" height="17.5" fill="#4b5454"/><rect x="2582.96" y="2.5" width="2" height="17.5" fill="#4b5454"/><rect x="2589.44" y="2.5" width="2" height="17.5" fill="#4b5454"/><rect x="2595.91" y="2.5" width="2" height="17.5" fill="#4b5454"/><rect x="2602.39" y="2.5" width="2" height="17.5" fill="#4b5454"/><rect x="2608.86" y="2.5" width="2" height="17.5" fill="#4b5454"/><rect x="2615.33" y="2.5" width="2" height="17.5" fill="#4b5454"/><rect x="2621.81" y="2.5" width="2" height="17.5" fill="#4b5454"/><rect x="2628.28" y="2.5" width="2" height="17.5" fill="#4b5454"/><rect x="2634.75" y="2.5" width="2" height="17.5" fill="#4b5454"/><rect x="2641.23" y="2.5" width="2" height="17.5" fill="#4b5454"/><rect x="2647.70" y="2.5" width="2" height="17.5" fill="#4b5454"/><rect x="2654.17" y="2.5" width="2" height="17.5" fill="#4b5454"/><rect x="2660.65" y="2.5" width="2" height="17.5" fill="#4b5454"/><rect x="2667.12" y="2.5" width="2" height="17.5" fill="#4b5454"/><rect x="2673.59" y="2.5" width="2" height="17.5" fill="#4b5454"/><rect x="2680.07" y="2.5" width="2" height="17.5" fill="#4b5454"/><rect x="2686.54" y="2.5" width="2" height="17.5" fill="#4b5454"/><rect x="2693.01" y="2.5" width="2" height="17.5" fill="#4b5454"/><rect x="2699.49" y="2.5" width="2" height="17.5" fill="#4b5454"/><rect x="2705.96" y="2.5" width="2" height="17.5" fill="#4b5454"/><rect x="2712.44" y="2.5" width="2" height="17.5" fill="#4b5454"/><rect x="2718.91" y="2.5" width="2" height="17.5" fill="#4b5454"/><rect x="2725.38" y="2.5" width="2" height="17.5" fill="#4b5454"/><rect x="2731.86" y="2.5" width="2" height="17.5" fill="#4b5454"/><rect x="2738.33" y="2.5" width="2" height="17.5" fill="#4b5454"/><rect x="2744.80" y="2.5" width="2" height="17.5" fill="#4b5454"/></svg>
<svg style="left:25px;top:2111.5px" width="2751" height="26"><rect x="109.05" y="0" width="2.2" height="25" fill="#3c4545"/><rect x="219.10" y="0" width="2.2" height="25" fill="#3c4545"/><rect x="329.15" y="0" width="2.2" height="25" fill="#3c4545"/><rect x="439.20" y="0" width="2.2" height="25" fill="#3c4545"/><rect x="549.25" y="0" width="2.2" height="25" fill="#3c4545"/><rect x="659.30" y="0" width="2.2" height="25" fill="#3c4545"/><rect x="769.35" y="0" width="2.2" height="25" fill="#3c4545"/><rect x="879.40" y="0" width="2.2" height="25" fill="#3c4545"/><rect x="989.45" y="0" width="2.2" height="25" fill="#3c4545"/><rect x="1099.50" y="0" width="2.2" height="25" fill="#3c4545"/><rect x="1209.55" y="0" width="2.2" height="25" fill="#3c4545"/><rect x="1319.60" y="0" width="2.2" height="25" fill="#3c4545"/><rect x="1429.65" y="0" width="2.2" height="25" fill="#3c4545"/><rect x="1539.70" y="0" width="2.2" height="25" fill="#3c4545"/><rect x="1649.75" y="0" width="2.2" height="25" fill="#3c4545"/><rect x="1759.80" y="0" width="2.2" height="25" fill="#3c4545"/><rect x="1869.85" y="0" width="2.2" height="25" fill="#3c4545"/><rect x="1979.90" y="0" width="2.2" height="25" fill="#3c4545"/><rect x="2089.95" y="0" width="2.2" height="25" fill="#3c4545"/><rect x="2200.00" y="0" width="2.2" height="25" fill="#3c4545"/><rect x="2310.05" y="0" width="2.2" height="25" fill="#3c4545"/><rect x="2420.10" y="0" width="2.2" height="25" fill="#3c4545"/><rect x="2530.15" y="0" width="2.2" height="25" fill="#3c4545"/><rect x="2640.20" y="0" width="2.2" height="25" fill="#3c4545"/></svg>
<span style="left:137.55px;top:2116.66px;font-size:17.15px;line-height:17.15px;color:#9aabab;font-weight:400;transform:scaleX(1.1321);">40000</span>
<span style="left:247.60px;top:2116.66px;font-size:17.15px;line-height:17.15px;color:#9aabab;font-weight:400;transform:scaleX(1.1321);">80000</span>
<span style="left:357.65px;top:2116.66px;font-size:17.15px;line-height:17.15px;color:#9aabab;font-weight:400;transform:scaleX(1.1322);">120000</span>
<span style="left:467.70px;top:2116.66px;font-size:17.15px;line-height:17.15px;color:#9aabab;font-weight:400;transform:scaleX(1.1322);">160000</span>
<span style="left:577.75px;top:2116.66px;font-size:17.15px;line-height:17.15px;color:#9aabab;font-weight:400;transform:scaleX(1.1322);">200000</span>
<span style="left:687.80px;top:2116.66px;font-size:17.15px;line-height:17.15px;color:#9aabab;font-weight:400;transform:scaleX(1.1322);">240000</span>
<span style="left:797.85px;top:2116.66px;font-size:17.15px;line-height:17.15px;color:#9aabab;font-weight:400;transform:scaleX(1.1322);">280000</span>
<span style="left:907.90px;top:2116.66px;font-size:17.15px;line-height:17.15px;color:#9aabab;font-weight:400;transform:scaleX(1.1322);">320000</span>
<span style="left:1017.95px;top:2116.66px;font-size:17.15px;line-height:17.15px;color:#9aabab;font-weight:400;transform:scaleX(1.1322);">360000</span>
<span style="left:1128.00px;top:2116.66px;font-size:17.15px;line-height:17.15px;color:#9aabab;font-weight:400;transform:scaleX(1.1322);">400000</span>
<span style="left:1238.05px;top:2116.66px;font-size:17.15px;line-height:17.15px;color:#9aabab;font-weight:400;transform:scaleX(1.1322);">440000</span>
<span style="left:1348.10px;top:2116.66px;font-size:17.15px;line-height:17.15px;color:#9aabab;font-weight:400;transform:scaleX(1.1322);">480000</span>
<span style="left:1458.15px;top:2116.66px;font-size:17.15px;line-height:17.15px;color:#9aabab;font-weight:400;transform:scaleX(1.1322);">520000</span>
<span style="left:1568.20px;top:2116.66px;font-size:17.15px;line-height:17.15px;color:#9aabab;font-weight:400;transform:scaleX(1.1322);">560000</span>
<span style="left:1678.25px;top:2116.66px;font-size:17.15px;line-height:17.15px;color:#9aabab;font-weight:400;transform:scaleX(1.1322);">600000</span>
<span style="left:1788.30px;top:2116.66px;font-size:17.15px;line-height:17.15px;color:#9aabab;font-weight:400;transform:scaleX(1.1322);">640000</span>
<span style="left:1898.35px;top:2116.66px;font-size:17.15px;line-height:17.15px;color:#9aabab;font-weight:400;transform:scaleX(1.1322);">680000</span>
<span style="left:2008.40px;top:2116.66px;font-size:17.15px;line-height:17.15px;color:#9aabab;font-weight:400;transform:scaleX(1.1322);">720000</span>
<span style="left:2118.45px;top:2116.66px;font-size:17.15px;line-height:17.15px;color:#9aabab;font-weight:400;transform:scaleX(1.1322);">760000</span>
<span style="left:2228.50px;top:2116.66px;font-size:17.15px;line-height:17.15px;color:#9aabab;font-weight:400;transform:scaleX(1.1322);">800000</span>
<span style="left:2338.55px;top:2116.66px;font-size:17.15px;line-height:17.15px;color:#9aabab;font-weight:400;transform:scaleX(1.1322);">840000</span>
<span style="left:2448.60px;top:2116.66px;font-size:17.15px;line-height:17.15px;color:#9aabab;font-weight:400;transform:scaleX(1.1322);">880000</span>
<span style="left:2558.65px;top:2116.66px;font-size:17.15px;line-height:17.15px;color:#9aabab;font-weight:400;transform:scaleX(1.1322);">920000</span>
<span style="left:2668.70px;top:2116.66px;font-size:17.15px;line-height:17.15px;color:#9aabab;font-weight:400;transform:scaleX(1.1322);">960000</span>
<svg style="left:24px;top:2111px" width="22" height="52" viewBox="0 0 22 52"><path d="M1 0 H21.2 V21.8 L4.2 30.9 V50.6 H1Z" fill="#0a84ff"/></svg>
<div style="left:25px;top:2111px;width:20px;height:25px;overflow:hidden;"><span style="left:-6.5px;top:4.58px;font-size:18.3px;line-height:18.3px;color:#10304e;transform:scaleX(0.95);">0</span></div>
<svg style="left:2px;top:2120px" width="18" height="16"><path d="M3 2 L14.5 13.5 M14.5 2 L3 13.5" stroke="#b8b8b8" stroke-width="3.2"/></svg>
<div style="left:4.4px;top:2146px;width:1.5999999999999996px;height:53px;background:#777;"></div>
<div style="left:10.899999999999999px;top:2146px;width:1.6000000000000014px;height:53px;background:#777;"></div>
<div style="left:17.2px;top:2146px;width:1.6000000000000014px;height:53px;background:#777;"></div>
<div style="left:25.2px;top:2165.2px;width:124.49999999999999px;height:36.80000000000018px;background:#201f24;border-radius:5px;"></div>
<span style="left:37.50px;top:2175.55px;font-size:18.46px;line-height:18.46px;color:#c8c8c8;font-weight:400;transform:scaleX(0.9743);">0</span>
<div style="left:156.8px;top:2165.2px;width:119.19999999999999px;height:36.80000000000018px;background:#201f24;border-radius:5px 0 0 5px;"></div>
<span style="left:169.00px;top:2175.55px;font-size:18.46px;line-height:18.46px;color:#c8c8c8;font-weight:400;transform:scaleX(0.9743);">0</span>
<div style="left:276px;top:2165.2px;width:2221px;height:36.80000000000018px;background:#262626;"></div>
<div style="left:282.2px;top:2165px;width:21.80000000000001px;height:37px;background:#9a9a9a;border-radius:4px;"></div>
<div style="left:2497px;top:2164.5px;width:22.300000000000182px;height:37.90000000000009px;background:#9a9a9a;border-radius:4px;"></div>
<div style="left:2525.2px;top:2164.5px;width:119.30000000000018px;height:37.90000000000009px;background:#201f24;border-radius:4px;"></div>
<span style="left:2538.30px;top:2174.28px;font-size:19.48px;line-height:19.48px;color:#c8c8c8;font-weight:400;transform:scaleX(1.0036);">1000000</span>
<div style="left:2650.7px;top:2164.5px;width:125.20000000000027px;height:37.90000000000009px;background:#201f24;border-radius:4px;"></div>
<span style="left:2664.50px;top:2174.28px;font-size:19.48px;line-height:19.48px;color:#c8c8c8;font-weight:400;transform:scaleX(0.9904);">1000000</span>
<div style="left:2785.5px;top:2117.7px;width:124.5px;height:37.30000000000018px;background:#201f24;border-radius:4px;"></div>
<span style="left:2797.60px;top:2128.57px;font-size:18.31px;line-height:18.31px;color:#c8c8c8;font-weight:400;transform:scaleX(0.9821);">0</span>
<div style="left:2785.5px;top:2164.5px;width:93.5px;height:37.90000000000009px;background:#262628;border-radius:5px;"></div>
<div style="left:2785.5px;top:2164.5px;width:66.5px;height:37.90000000000009px;background:#201f24;border-radius:5px 0 0 5px;"></div>
<span style="left:2797.60px;top:2174.28px;font-size:19.48px;line-height:19.48px;color:#c8c8c8;font-weight:400;transform:scaleX(1.0065);">60</span>
<svg style="left:2851px;top:2175px" width="19" height="17"><path d="M1.5 1.4 H17.5 L9.5 15.3Z" fill="#d8d8d8"/></svg>
<span style="left:2880.00px;top:2174.28px;font-size:19.48px;line-height:19.48px;color:#c8c8c8;font-weight:400;transform:scaleX(0.7655);">FPS</span>
<svg style="left:2918px;top:2115px" width="276" height="34" viewBox="0 0 276 34">
<path d="M4.5 5.5 V29.5" stroke="#a0a0a0" stroke-width="2.2"/><path d="M23 5.5 V29.5 L6 17.5Z" fill="#a0a0a0"/>
<path d="M34.6 17.5 L53 5.5 V29.5Z" fill="#a0a0a0"/><path d="M57.8 5.5 V29.5" stroke="#a0a0a0" stroke-width="2.2"/>
<rect x="69.8" y="5.8" width="24.6" height="23.8" stroke="#8c8c8c" stroke-width="1.1" fill="none"/><rect x="69.3" y="5.3" width="3.6" height="24.8" fill="#d86060"/><path d="M74.2 16.6 L91.6 6.7 V27.8Z" fill="#a0a0a0"/>
<path d="M103.7 4.5 L128.6 17.5 L103.7 30.5Z" fill="#a0a0a0"/>
<rect x="138.6" y="5.8" width="24.6" height="23.8" stroke="#8c8c8c" stroke-width="1.1" fill="none"/><rect x="159.7" y="5.3" width="3.6" height="24.8" fill="#d86060"/><path d="M141 6.7 L159 16.6 L141 27.8Z" fill="#a0a0a0"/>
<path d="M173.5 5.5 V29.5" stroke="#a0a0a0" stroke-width="2.2"/><path d="M177.5 5.5 L197.8 17.5 L177.5 29.5Z" fill="#a0a0a0"/>
<path d="M208.5 5.5 L226 17.5 L208.5 29.5Z" fill="#a0a0a0"/><path d="M227.8 5.5 V29.5" stroke="#a0a0a0" stroke-width="2.2"/>
<rect x="237.5" y="1.2" width="33.5" height="29.7" rx="4" fill="#1e1e1e"/>
<path d="M244.9 13 V26.5 H257.9 M249.9 5.5 H260.4 V21" stroke="#a8a8a8" stroke-width="3.7" fill="none"/>
<path d="M239.5 13.8 L244.9 5 L250.3 13.8Z M255 20.4 H265.8 L260.4 28.3Z" fill="#a8a8a8"/>
</svg>
<svg style="left:2933px;top:2170px" width="26" height="26" viewBox="0 0 26 26">
<circle cx="15.5" cy="6.5" r="4" stroke="#5aa060" stroke-width="2.2" fill="none"/>
<path d="M13.3 10 L5 19.5 M8 16.5 L10.5 19" stroke="#5aa060" stroke-width="2.2"/>
<path d="M18 18.5 H25 M21.5 15 V22.5" stroke="#5aa060" stroke-width="2"/>
</svg>
<div style="left:2986px;top:2167.8px;width:49.5px;height:31.199999999999818px;background:#3a3a3a;border-radius:3px;"></div>
<span style="left:2989.60px;top:2174.28px;font-size:19.48px;line-height:19.48px;color:#d8d8d8;font-weight:400;transform:scaleX(1.0783);">Auto</span>
<div style="left:3058px;top:2167.8px;width:1.5px;height:31.199999999999818px;background:#5a5a5a;"></div>
<svg style="left:3082px;top:2170px" width="100" height="28" viewBox="0 0 100 28">
<rect x="1.8" y="10" width="24" height="15.3" fill="#8a8a8a"/>
<path d="M1.5 6.5 L24.5 1 L25.7 5.8 L2.7 11.3Z" fill="#9a9a9a"/>
<path d="M5 5.7 L8.5 4.9 L10 9.6 L6.5 10.4Z M11.5 4.1 L15 3.3 L16.5 8 L13 8.8Z M18 2.5 L21.5 1.7 L23 6.4 L19.5 7.2Z" fill="#dcdcdc"/>
<path d="M2 11.5 H25.8" stroke="#dcdcdc" stroke-width="1.2" stroke-dasharray="3 3"/>
<circle cx="48.1" cy="13.9" r="10.6" stroke="#e05050" stroke-width="1.3" fill="none" stroke-dasharray="2.2 1.2"/>
<circle cx="48.1" cy="13.9" r="8.4" fill="#d85c5c"/>
<path d="M70 5.2 H95.3 M70 13.9 H95.3 M70 22.6 H95.3" stroke="#dcdcdc" stroke-width="3.9"/>
</svg>
<svg style="left:0;top:0" width="3194" height="2258" viewBox="0 0 3194 2258">
<path d="M1470.3 1130.8 L2088 434" stroke="#78be43" stroke-width="6" stroke-linecap="butt"/>
<path d="M2102.3 417.9 L2070.2 430.8 L2078.8 439.1 L2083.8 443.4 L2093 450.8Z" fill="#78be43"/>
</svg>
</body></html>
